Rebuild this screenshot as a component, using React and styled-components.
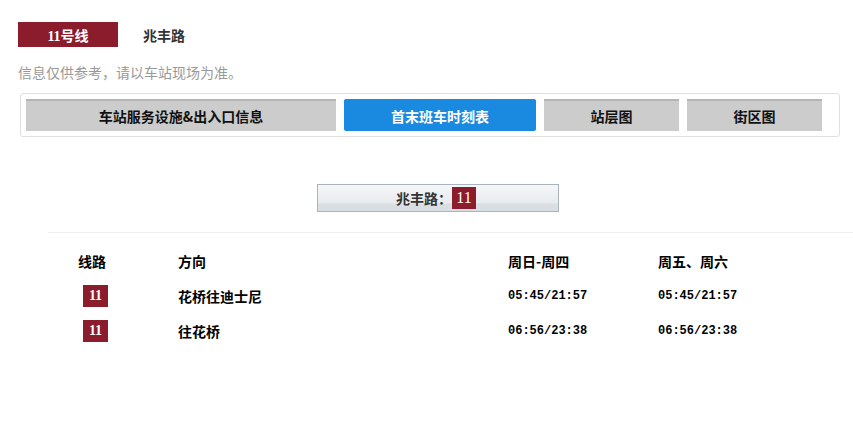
import React from "react";
import styled, { createGlobalStyle } from "styled-components";

const Global = createGlobalStyle`
  html, body { margin: 0; padding: 0; background: #fff; }
  body { font-family: "Noto Sans CJK SC", "Liberation Sans", sans-serif; }
`;

const Page = styled.div`
  padding: 22px 0 0 18px;
  width: 835px;
  box-sizing: border-box;
`;

const TitleRow = styled.div`
  display: flex;
  align-items: center;
  height: 25px;
`;

const LineBadge = styled.div`
  width: 100px;
  height: 25px;
  background: #8a1c2c;
  color: #fff;
  display: flex;
  align-items: center;
  justify-content: center;
  font-weight: bold;
  font-size: 14px;
  font-family: "Liberation Serif", "Noto Sans CJK SC", serif;
`;

const StationName = styled.div`
  margin-left: 25px;
  font-size: 14px;
  font-weight: bold;
  color: #333;
`;

const Notice = styled.div`
  margin-top: 15px;
  font-size: 14px;
  line-height: 20px;
  color: #999;
`;

const TabBox = styled.div`
  margin: 11px 0 0 2px;
  width: 820px;
  box-sizing: border-box;
  border: 1px solid #e0e0e0;
  border-radius: 3px;
  padding: 5px;
  display: flex;
  gap: 8px;
`;

const Tab = styled.div`
  width: ${(p) => p.$w}px;
  height: 32px;
  box-sizing: border-box;
  display: flex;
  align-items: center;
  justify-content: center;
  font-size: 14px;
  font-weight: bold;
  background: ${(p) => (p.$active ? "#1a89e0" : "#cccccc")};
  color: ${(p) => (p.$active ? "#fff" : "#111")};
  border-top: 2px solid ${(p) => (p.$active ? "#1a89e0" : "#b5b5b5")};
  border-radius: ${(p) => (p.$active ? "2px" : "0")};
`;

const StationBar = styled.div`
  margin: 47px 0 0 299px;
  width: 242px;
  height: 28px;
  box-sizing: border-box;
  border: 1px solid #a9b4be;
  background: linear-gradient(to bottom, #f5f6f8 0%, #e8ebee 70%, #d9dee2 72%, #d9dee2 100%);
  display: flex;
  align-items: center;
  justify-content: flex-start;
  font-size: 14px;
  font-weight: bold;
  color: #333;
  padding-left: 78px;
`;

const NumBadge = styled.span`
  display: inline-flex;
  align-items: center;
  justify-content: center;
  width: ${(p) => p.$w}px;
  height: 22px;
  background: #8a1c2c;
  color: #fff;
  font-family: "Liberation Serif", serif;
  font-weight: ${(p) => (p.$bold ? "bold" : "normal")};
  font-size: ${(p) => p.$fs}px;
`;

const Divider = styled.div`
  margin: 20px 0 0 30px;
  height: 1px;
  background: #efefef;
  width: 805px;
`;

const Table = styled.div`
  margin: 10px 0 0 30px;
  display: grid;
  grid-template-columns: 130px 330px 150px 150px;
  grid-auto-rows: 35px;
  align-items: center;
  color: #000;
`;

const HeadCell = styled.div`
  font-size: 14px;
  font-weight: bold;
  padding-left: ${(p) => p.$pl || 0}px;
`;

const Cell = styled.div`
  font-size: 14px;
  font-weight: bold;
  display: flex;
  padding-left: ${(p) => p.$pl || 0}px;
`;

const Time = styled.div`
  font-family: "Liberation Mono", monospace;
  font-weight: bold;
  font-size: 12px;
`;

const rows = [
  { dir: "花桥往迪士尼", a: "05:45/21:57", b: "05:45/21:57" },
  { dir: "往花桥", a: "06:56/23:38", b: "06:56/23:38" },
];

export default function App() {
  return (
    <>
      <Global />
      <Page>
        <TitleRow>
          <LineBadge>11号线</LineBadge>
          <StationName>兆丰路</StationName>
        </TitleRow>
        <Notice>信息仅供参考，请以车站现场为准。</Notice>
        <TabBox>
          <Tab $w={310}>车站服务设施&amp;出入口信息</Tab>
          <Tab $w={192} $active>首末班车时刻表</Tab>
          <Tab $w={135}>站层图</Tab>
          <Tab $w={135}>街区图</Tab>
        </TabBox>
        <StationBar>
          兆丰路：<NumBadge $w={24} $fs={16}>11</NumBadge>
        </StationBar>
        <Divider />
        <Table>
          <HeadCell $pl={30}>线路</HeadCell>
          <HeadCell>方向</HeadCell>
          <HeadCell>周日-周四</HeadCell>
          <HeadCell>周五、周六</HeadCell>
          {rows.map((r) => (
            <React.Fragment key={r.dir}>
              <Cell $pl={35}>
                <NumBadge $w={25} $fs={14} $bold>11</NumBadge>
              </Cell>
              <Cell>{r.dir}</Cell>
              <Time>{r.a}</Time>
              <Time>{r.b}</Time>
            </React.Fragment>
          ))}
        </Table>
      </Page>
    </>
  );
}
